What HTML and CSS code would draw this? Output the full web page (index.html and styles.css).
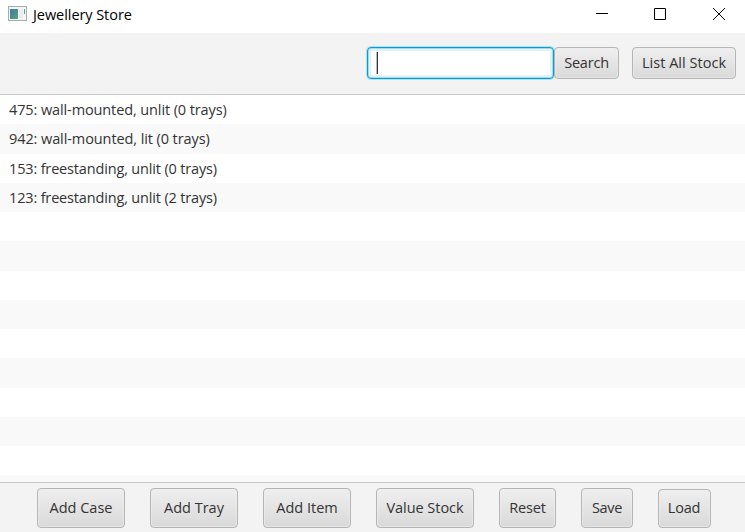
FILE: index.html
```html
<!DOCTYPE html>
<html lang="en">
<head>
<meta charset="utf-8">
<title>Jewellery Store</title>
<link rel="stylesheet" href="styles.css">
</head>
<body>
<div class="window">
  <header class="titlebar">
    <svg class="app-icon" width="20" height="16" viewBox="0 0 20 16">
      <defs><linearGradient id="pane" x1="0" y1="0" x2="1" y2="1"><stop offset="0" stop-color="#4577a0"/><stop offset="1" stop-color="#52a77b"/></linearGradient></defs>
      <rect x=".5" y=".5" width="18" height="14" fill="#f5f5f5" stroke="#a3acb1"/>
      <rect x="2" y="3" width="8" height="10" fill="url(#pane)"/>
      <rect x="11" y="3" width="4" height="10" fill="#e9eded"/>
      <path d="M16 3h1v5h-1z" fill="#55a586"/>
    </svg>
    <h1 class="title">Jewellery Store</h1>
    <svg class="controls" width="130" height="14" viewBox="0 0 130 14" fill="none" stroke="#000">
      <path d="M0 6.5h12M58.500 1.500h11v11h-11z"/>
      <path d="M117 1l12 12M129 1l-12 12"/>
    </svg>
  </header>
  <div class="toolbar">
    <div class="search-field"><span class="caret"></span></div>
    <button class="btn search">Search</button>
    <button class="btn all">List All Stock</button>
  </div>
  <ul class="list">
    <li class="r1"><span>475: wall-mounted, unlit (0 trays)</span></li>
    <li class="r2"><span>942: wall-mounted, lit (0 trays)</span></li>
    <li class="r3"><span>153: freestanding, unlit (0 trays)</span></li>
    <li class="r3"><span>123: freestanding, unlit (2 trays)</span></li>
    <li></li><li></li><li></li><li></li><li></li><li></li><li></li><li></li><li></li><li></li>
  </ul>
  <footer class="actions">
    <button class="btn case">Add Case</button>
    <button class="btn tray">Add Tray</button>
    <button class="btn item">Add Item</button>
    <button class="btn value">Value Stock</button>
    <button class="btn reset">Reset</button>
    <button class="btn save">Save</button>
    <button class="btn load">Load</button>
  </footer>
</div>
</body>
</html>
```
FILE: styles.css
```css
* { box-sizing: border-box; }
body { margin: 0; font: 14.5px/20px "Open Sans", "Noto Sans", sans-serif; color: #333; overflow: hidden; }
.window { width: 745px; height: 532px; display: flex; flex-direction: column; background: #f3f3f3; }
.titlebar { height: 33px; flex: none; display: flex; align-items: flex-start; background: #fff; padding: 6px 19px 0 8px; }
.app-icon { flex: none; }
.title { margin: -1px auto 0 5px; font-size: 14.5px; font-weight: 400; color: #000; letter-spacing: -.06px; white-space: nowrap; }
.controls { flex: none; margin: 1px 0 0; }
.toolbar { height: 62px; flex: none; display: flex; justify-content: flex-end; padding: 14px 9px 0 0; border-bottom: 1px solid #c8c8c8; }
.search-field { width: 187px; height: 32px; background: #fff; border: 1px solid #039ed3; border-radius: 4px; box-shadow: 0 0 0 1px #b5dfed, inset 0 0 0 1px #a7daea, inset 0 0 0 3px #e2f3f8; padding: 4px 0 0 9px; }
.caret { display: block; width: 1px; height: 22px; background: #333; box-shadow: -1px 0 #bbb; }
.btn { height: 32px; flex: none; padding: 0; font: inherit; color: #333; text-align: center; white-space: nowrap; border: 1px solid #b5b5b5; border-radius: 4px; background: linear-gradient(#efefef, #d9d9d9); box-shadow: inset 0 0 0 1px #eee9; letter-spacing: -.2px; }
.search { width: 65px; }
.all { width: 104px; margin-left: 13px; letter-spacing: .03px; }
.list { flex: 1; min-height: 0; overflow: hidden; margin: 0; padding: 0; list-style: none; background: #fff; }
.list li { height: 29.25px; padding: 5px 0 0 9px; white-space: nowrap; }
.list li:nth-child(even) { background: #f9f9f9; }
.r1 { letter-spacing: -.11px; }
.r2 { letter-spacing: -.09px; }
.r3 { letter-spacing: -.16px; }
.actions { height: 50px; flex: none; display: flex; gap: 25px; padding: 5px 0 0 37px; border-top: 1px solid #c8c8c8; }
.actions .btn { height: 40px; }
.case, .tray, .item { width: 88px; letter-spacing: 0; }
.value { width: 98px; letter-spacing: -.03px; }
.reset { width: 57px; }
.save { width: 52px; letter-spacing: -.3px; }
.load { width: 53px; }
.actions .load { height: 39px; margin-top: 1px; padding: 0 1px 2px 0; }
```
